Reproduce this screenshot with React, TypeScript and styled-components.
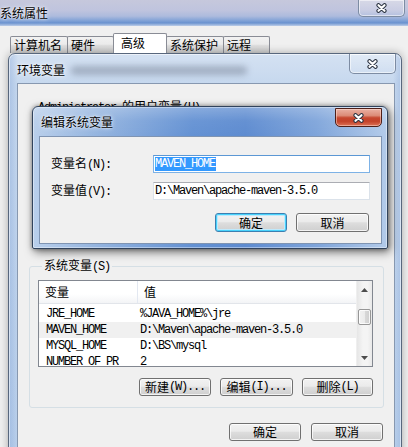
import React from "react";
import styled, { createGlobalStyle, css } from "styled-components";

const CJK = `"Noto Sans CJK SC", "Noto Sans", sans-serif`;
const MONO = `"Liberation Mono", "DejaVu Sans Mono", monospace`;

const GlobalStyle = createGlobalStyle`
  html, body { margin: 0; padding: 0; width: 408px; height: 447px; overflow: hidden; background: #a9b9d9; }
  body { font-family: ${CJK}; font-size: 12px; color: #000; }
  * { box-sizing: border-box; }
`;

const Desktop = styled.div`
  position: relative;
  width: 408px;
  height: 447px;
  overflow: hidden;
  font-family: ${CJK};
  font-size: 12px;
  line-height: 14px;
  background: linear-gradient(90deg, #b8c2dc, #9fb5dc);
`;

const monoText = css`
  font-family: ${MONO};
  font-size: 12px;
  letter-spacing: -1.2px;
`;

const M = styled.span`
  ${monoText}
`;

/* ---------- close button ---------- */
const CloseBtn = styled.div<{ $variant: "red" | "glass"; $h: number }>`
  width: 47px;
  height: ${(p) => p.$h}px;
  flex: none;
  display: flex;
  align-items: center;
  justify-content: center;
  border-radius: 0 0 5px 5px;
  ${(p) =>
    p.$variant === "red"
      ? css`
          border: 1px solid #4e1f18;
          background: linear-gradient(180deg, #eab0a2 0%, #dc8c78 38%, #c6472f 52%, #c3422a 72%, #dc7257 100%);
          box-shadow: inset 0 0 0 1px rgba(255, 225, 215, 0.5);
        `
      : css`
          border: 1px solid #7d8ca3;
          border-top: none;
          background: linear-gradient(180deg, rgba(255, 255, 255, 0.3), rgba(255, 255, 255, 0.08));
          box-shadow: inset 0 0 0 1px rgba(255, 255, 255, 0.55);
        `}
`;

const XGlyph = () => (
  <svg width="13" height="10" viewBox="0 0 13 10">
    <path d="M3.5 2.2 L9.5 7.8 M9.5 2.2 L3.5 7.8" stroke="#2c3442" strokeWidth="4.2" strokeLinecap="round" />
    <path d="M3.5 2.2 L9.5 7.8 M9.5 2.2 L3.5 7.8" stroke="#ffffff" strokeWidth="2.2" strokeLinecap="round" />
  </svg>
);

/* ---------- buttons ---------- */
const Button = styled.div<{ $w: number; $h?: number; $default?: boolean }>`
  width: ${(p) => p.$w}px;
  height: ${(p) => p.$h ?? 18}px;
  flex: none;
  display: flex;
  align-items: center;
  justify-content: center;
  border: 1px solid #707070;
  border-radius: 3px;
  background: linear-gradient(180deg, #f2f2f2 0%, #ebebeb 45%, #dddddd 52%, #cfcfcf 100%);
  box-shadow: inset 0 0 0 1px rgba(255, 255, 255, 0.75);
  ${(p) =>
    p.$default &&
    css`
      border-color: #3c7fb1;
      box-shadow: inset 0 0 0 1px #48d2fb, inset 0 0 0 2px #bfe9fc;
    `}
`;

/* ---------- back window ---------- */
const BackWindow = styled.div`
  position: absolute;
  left: -12px;
  top: 0;
  width: 424px;
  height: 460px;
  display: flex;
  flex-direction: column;
`;

const BackTitleBar = styled.div`
  height: 26px;
  display: flex;
  align-items: flex-start;
  padding: 0 7px 0 12px;
  background: linear-gradient(180deg, #c6c8dc 0%, #bfc4de 40%, #adbbdd 62%, #7fa1d6 80%, #6a92cf 88%, #bccde8 100%);
`;

const Title = styled.div<{ $top: number }>`
  margin-top: ${(p) => p.$top}px;
  font-size: 12px;
  line-height: 14px;
  color: #000;
  text-shadow: 0 0 5px rgba(255, 255, 255, 0.95), 0 0 2px rgba(255, 255, 255, 0.9);
  white-space: nowrap;
`;

const Spacer = styled.div`
  flex: 1;
`;

const BackBody = styled.div`
  flex: 1;
  background: #f0f0f0;
  padding: 7px 0 0 22px;
`;

const TabStrip = styled.div`
  display: flex;
  align-items: flex-end;
  height: 20px;
`;

const Tab = styled.div<{ $w: number; $active?: boolean }>`
  position: relative;
  width: ${(p) => p.$w}px;
  height: ${(p) => (p.$active ? 20 : 17)}px;
  margin-left: -1px;
  &:first-child { margin-left: 0; }
  border: 1px solid #898c95;
  border-bottom: none;
  border-radius: 2px 2px 0 0;
  padding-left: ${(p) => (p.$active ? 7 : 3)}px;
  padding-top: ${(p) => (p.$active ? 2 : 1)}px;
  font-size: 12px;
  line-height: 14px;
  white-space: nowrap;
  z-index: ${(p) => (p.$active ? 1 : 0)};
  background: ${(p) =>
    p.$active ? "#ffffff" : "linear-gradient(180deg, #f2f2f2 0%, #ebebeb 45%, #dddddd 55%, #cfcfcf 100%)"};
`;

/* ---------- environment window ---------- */
const EnvWindow = styled.div`
  position: absolute;
  left: 8px;
  top: 53px;
  width: 394px;
  height: 420px;
  border: 1px solid #58677d;
  border-radius: 7px 7px 0 0;
  padding: 0 6px 0 8px;
  display: flex;
  flex-direction: column;
  background:
    linear-gradient(90deg, rgba(120, 155, 210, 0.35) 0px, rgba(255, 255, 255, 0) 9px, rgba(255, 255, 255, 0) calc(100% - 8px), rgba(120, 155, 210, 0.3) 100%),
    linear-gradient(180deg, #d4e1f2 0%, #c6d8ee 30px, #bad0eb 100%);
  box-shadow: inset 0 0 0 1px rgba(255, 255, 255, 0.55), 0 0 8px rgba(0, 0, 0, 0.3);
`;

const EnvTitleBar = styled.div`
  height: 29px;
  margin: 0 -6px 0 -8px;
  padding: 0 5px 0 8px;
  display: flex;
  align-items: flex-start;
`;

const GlassBlur = styled.div`
  margin: 12px 0 0 6px;
  width: 176px;
  height: 9px;
  border-radius: 4px;
  background: rgba(70, 80, 100, 0.32);
  filter: blur(3px);
`;

const EnvClient = styled.div`
  flex: 1;
  background: #f0f0f0;
  border: 1px solid #8798b0;
  border-bottom: none;
  padding: 0 10px 0 11px;
  display: flex;
  flex-direction: column;
`;

const UserLabel = styled.div`
  margin-top: 15px;
  padding-left: 9px;
  height: 14px;
  white-space: nowrap;
`;

const UserArea = styled.div`
  height: 145px;
`;

const GroupBox = styled.fieldset`
  margin: 0;
  padding: 0 10px 11px 8px;
  border: 1px solid #d5dfe5;
  border-radius: 3px;
  min-width: 0;
`;

const Legend = styled.legend`
  margin-left: 4px;
  padding: 0 2px;
  font-size: 12px;
  line-height: 14px;
`;

/* list view */
const ListView = styled.div`
  margin-top: 6px;
  height: 87px;
  border: 1px solid #828790;
  background: #ffffff;
  display: flex;
  overflow: hidden;
`;

const ListContent = styled.div`
  flex: 1;
  display: flex;
  flex-direction: column;
  min-width: 0;
  overflow: hidden;
`;

const Cols = `99px 1fr`;

const ListHeader = styled.div`
  height: 23px;
  flex: none;
  display: grid;
  grid-template-columns: ${Cols};
  background: linear-gradient(180deg, #ffffff 0%, #ffffff 60%, #f3f4f6 100%);
  border-bottom: 1px solid #e2e5ea;
`;

const HeaderCell = styled.div<{ $first?: boolean }>`
  display: flex;
  align-items: center;
  padding-left: 6px;
  font-size: 12px;
  border-right: ${(p) => (p.$first ? "1px solid #e3e8f1" : "none")};
`;

const Rows = styled.div`
  padding-top: 2px;
`;

const Row = styled.div<{ $sel?: boolean }>`
  height: 16px;
  flex: none;
  display: grid;
  grid-template-columns: ${Cols};
  align-items: center;
  background: ${(p) => (p.$sel ? "#f0f0f0" : "transparent")};
`;

const Cell = styled.div<{ $pad: number }>`
  padding-left: ${(p) => p.$pad}px;
  ${monoText}
  white-space: nowrap;
  overflow: hidden;
  line-height: 14px;
`;

const ScrollBar = styled.div`
  width: 16px;
  flex: none;
  display: flex;
  flex-direction: column;
  background: linear-gradient(90deg, #e6e6e6 0%, #f4f4f4 40%, #f4f4f4 70%, #e9e9e9 100%);
  border-left: 1px solid #efefef;
`;

const Arrow = styled.div`
  height: 17px;
  flex: none;
  display: flex;
  align-items: center;
  justify-content: center;
`;

const Track = styled.div`
  flex: 1;
  padding: 11px 1px 0 1px;
`;

const Thumb = styled.div`
  height: 16px;
  border: 1px solid #979797;
  border-radius: 2px;
  background: linear-gradient(90deg, #f2f2f2 0%, #ebebeb 50%, #d9d9d9 51%, #cfcfcf 100%);
  box-shadow: inset 0 0 0 1px rgba(255, 255, 255, 0.8);
`;

const ButtonRow = styled.div<{ $mt: number; $gap: number; $pr?: number }>`
  margin-top: ${(p) => p.$mt}px;
  display: flex;
  justify-content: flex-end;
  gap: ${(p) => p.$gap}px;
  padding-right: ${(p) => p.$pr ?? 0}px;
`;

/* ---------- edit dialog ---------- */
const EditDialog = styled.div`
  position: absolute;
  left: 32px;
  top: 106px;
  width: 356px;
  height: 143px;
  border: 1px solid #31435c;
  border-radius: 6px 6px 2px 2px;
  padding: 0 5px 4px 6px;
  display: flex;
  flex-direction: column;
  background:
    linear-gradient(180deg, rgba(255, 255, 255, 0.25) 0px, rgba(255, 255, 255, 0.05) 14px, rgba(255, 255, 255, 0) 30px),
    linear-gradient(90deg, #b9cfeb 0%, #94b4df 18%, #6391d3 45%, #5d8bd0 60%, #7ea4da 80%, #b3cbea 100%);
  box-shadow: inset 0 0 0 1px rgba(255, 255, 255, 0.4), 2px 3px 10px rgba(0, 0, 0, 0.55), 0 0 4px rgba(0, 0, 0, 0.35);
`;

const DialogTitleBar = styled.div`
  height: 29px;
  margin: 0 -5px 0 -6px;
  padding: 1px 5px 0 8px;
  display: flex;
  align-items: flex-start;
`;

const DialogClient = styled.div`
  flex: 1;
  background: #f0f0f0;
  border: 1px solid #7f94b2;
  padding: 18px 11px 0 11px;
  display: flex;
  flex-direction: column;
`;

const FormGrid = styled.div`
  display: grid;
  grid-template-columns: 102px 1fr;
  row-gap: 9px;
  align-items: center;
`;

const FieldLabel = styled.div`
  white-space: nowrap;
  line-height: 14px;
`;

const TextBox = styled.div<{ $focused?: boolean }>`
  height: 18px;
  display: flex;
  align-items: center;
  padding-left: 1px;
  background: #ffffff;
  border: 1px solid ${(p) => (p.$focused ? "#7db2e6" : "#dbe2ea")};
  border-top-color: ${(p) => (p.$focused ? "#5b97d4" : "#abadb3")};
  ${monoText}
  white-space: nowrap;
  overflow: hidden;
`;

const Selected = styled.span`
  background: #3399ff;
  color: #ffffff;
  line-height: 14px;
  padding-right: 1px;
`;

const UpArrow = () => (
  <svg width="7" height="4" viewBox="0 0 7 4">
    <path d="M3.5 0 L7 4 L0 4 Z" fill="#4d4d4d" />
  </svg>
);
const DownArrow = () => (
  <svg width="7" height="4" viewBox="0 0 7 4">
    <path d="M0 0 L7 0 L3.5 4 Z" fill="#4d4d4d" />
  </svg>
);

const rows: { name: string; value: string; sel?: boolean }[] = [
  { name: "JRE_HOME", value: "%JAVA_HOME%\\jre" },
  { name: "MAVEN_HOME", value: "D:\\Maven\\apache-maven-3.5.0", sel: true },
  { name: "MYSQL_HOME", value: "D:\\BS\\mysql" },
  { name: "NUMBER_OF_PR", value: "2" },
];

export default function App() {
  return (
    <>
      <GlobalStyle />
      <Desktop>
        <BackWindow>
          <BackTitleBar>
            <Title $top={6}>系统属性</Title>
            <Spacer />
            <CloseBtn $variant="glass" $h={17}>
              <XGlyph />
            </CloseBtn>
          </BackTitleBar>
          <BackBody>
            <TabStrip>
              <Tab $w={58}>计算机名</Tab>
              <Tab $w={47}>硬件</Tab>
              <Tab $w={54} $active>
                高级
              </Tab>
              <Tab $w={58}>系统保护</Tab>
              <Tab $w={47}>远程</Tab>
            </TabStrip>
          </BackBody>
        </BackWindow>

        <EnvWindow>
          <EnvTitleBar>
            <Title $top={9}>环境变量</Title>
            <GlassBlur />
            <Spacer />
            <CloseBtn $variant="glass" $h={20}>
              <XGlyph />
            </CloseBtn>
          </EnvTitleBar>
          <EnvClient>
            <UserLabel>
              <M>Administrator </M>的用户变量<M>(U)</M>
            </UserLabel>
            <UserArea />
            <GroupBox>
              <Legend>
                系统变量<M>(S)</M>
              </Legend>
              <ListView>
                <ListContent>
                  <ListHeader>
                    <HeaderCell $first>变量</HeaderCell>
                    <HeaderCell>值</HeaderCell>
                  </ListHeader>
                  <Rows>
                    {rows.map((r) => (
                      <Row key={r.name} $sel={r.sel}>
                        <Cell $pad={7}>{r.name}</Cell>
                        <Cell $pad={2}>{r.value}</Cell>
                      </Row>
                    ))}
                  </Rows>
                </ListContent>
                <ScrollBar>
                  <Arrow>
                    <UpArrow />
                  </Arrow>
                  <Track>
                    <Thumb />
                  </Track>
                  <Arrow>
                    <DownArrow />
                  </Arrow>
                </ScrollBar>
              </ListView>
              <ButtonRow $mt={11} $gap={9}>
                <Button $w={72}>
                  新建<M>(W)...</M>
                </Button>
                <Button $w={73}>
                  编辑<M>(I)...</M>
                </Button>
                <Button $w={71}>
                  删除<M>(L)</M>
                </Button>
              </ButtonRow>
            </GroupBox>
            <ButtonRow $mt={15} $gap={10} $pr={1}>
              <Button $w={72}>确定</Button>
              <Button $w={72}>取消</Button>
            </ButtonRow>
          </EnvClient>
        </EnvWindow>

        <EditDialog>
          <DialogTitleBar>
            <Title $top={7}>编辑系统变量</Title>
            <Spacer />
            <CloseBtn $variant="red" $h={19}>
              <XGlyph />
            </CloseBtn>
          </DialogTitleBar>
          <DialogClient>
            <FormGrid>
              <FieldLabel>
                变量名<M>(N):</M>
              </FieldLabel>
              <TextBox $focused>
                <Selected>MAVEN_HOME</Selected>
              </TextBox>
              <FieldLabel>
                变量值<M>(V):</M>
              </FieldLabel>
              <TextBox>D:\Maven\apache-maven-3.5.0</TextBox>
            </FormGrid>
            <ButtonRow $mt={13} $gap={9} $pr={1}>
              <Button $w={72} $h={19} $default>
                确定
              </Button>
              <Button $w={73} $h={19}>
                取消
              </Button>
            </ButtonRow>
          </DialogClient>
        </EditDialog>
      </Desktop>
    </>
  );
}
